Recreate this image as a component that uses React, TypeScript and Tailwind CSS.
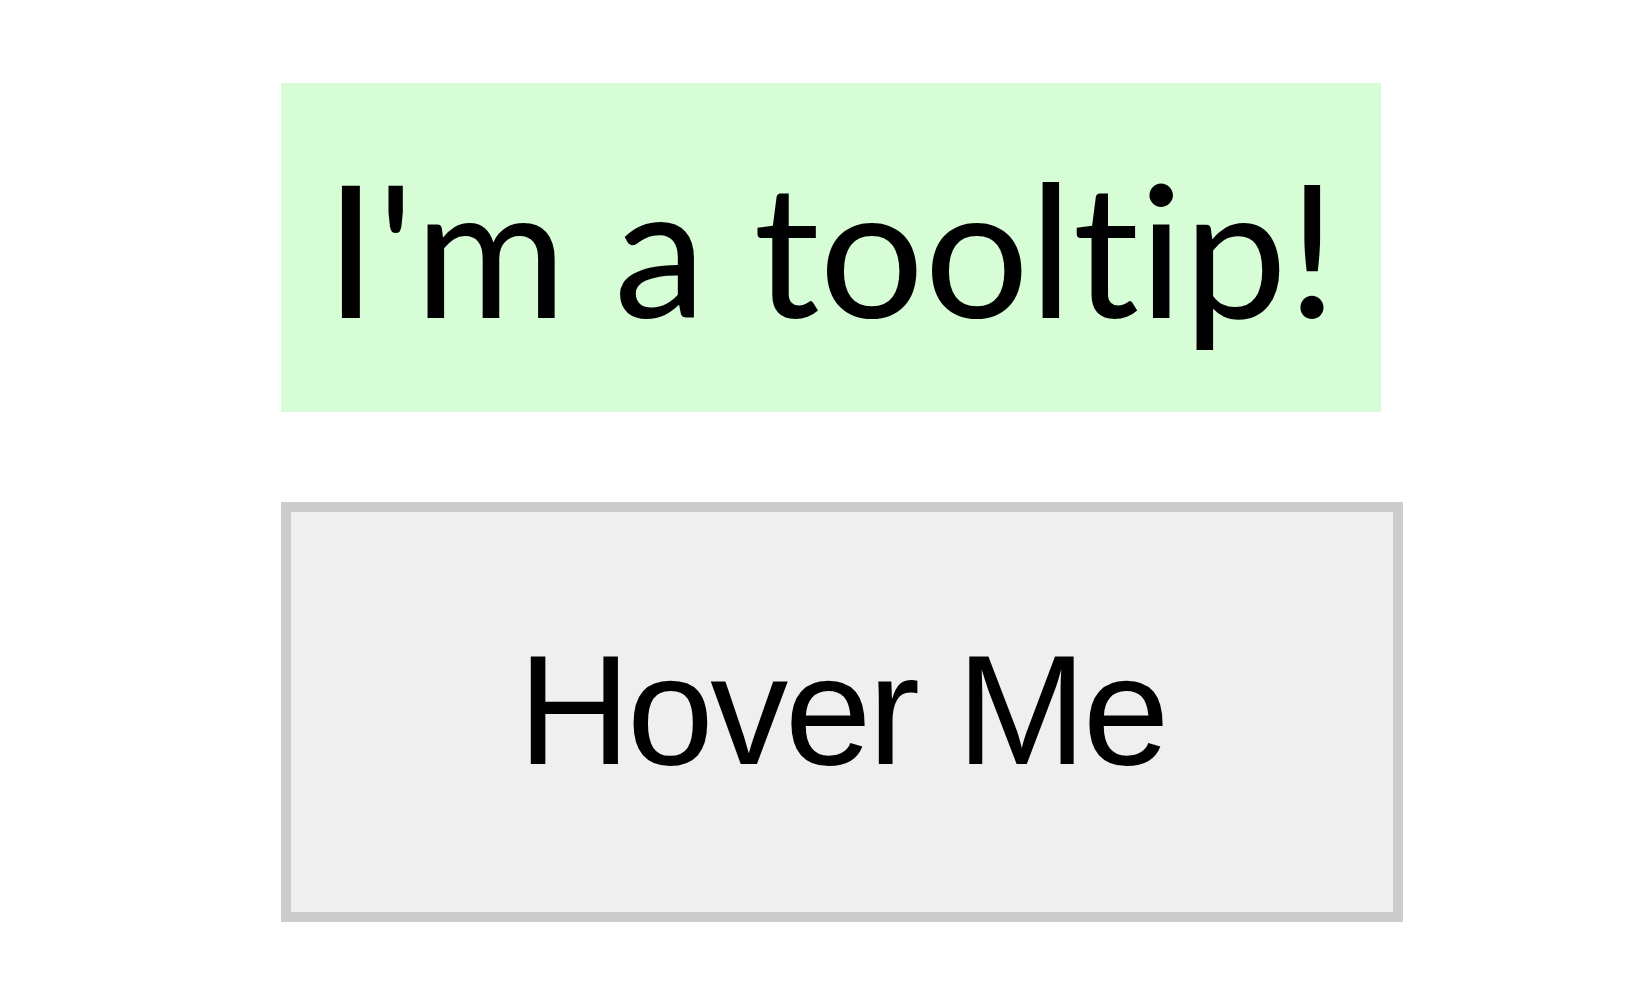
export default function App() {
  return (
    <div className="flex min-h-screen flex-col items-start bg-white pl-[281px] pt-[83px]">
      {/* tooltip */}
      <div className="flex h-[329px] w-[1100px] items-center justify-center bg-[#d6fdd6] font-['Lato',sans-serif] text-[185px] leading-none text-black [font-variant-ligatures:none]">
        <span className="-mt-[2px]">I'm a tooltip!</span>
      </div>

      {/* trigger */}
      <button
        type="button"
        className="mt-[90px] flex h-[420px] w-[1122px] items-center justify-center border-[10px] border-[#cccccc] bg-[#efefef] pb-[4px] font-['Liberation_Sans',Arial,sans-serif] text-[156px] leading-none tracking-[-3.5px] text-black"
      >
        Hover Me
      </button>
    </div>
  );
}
